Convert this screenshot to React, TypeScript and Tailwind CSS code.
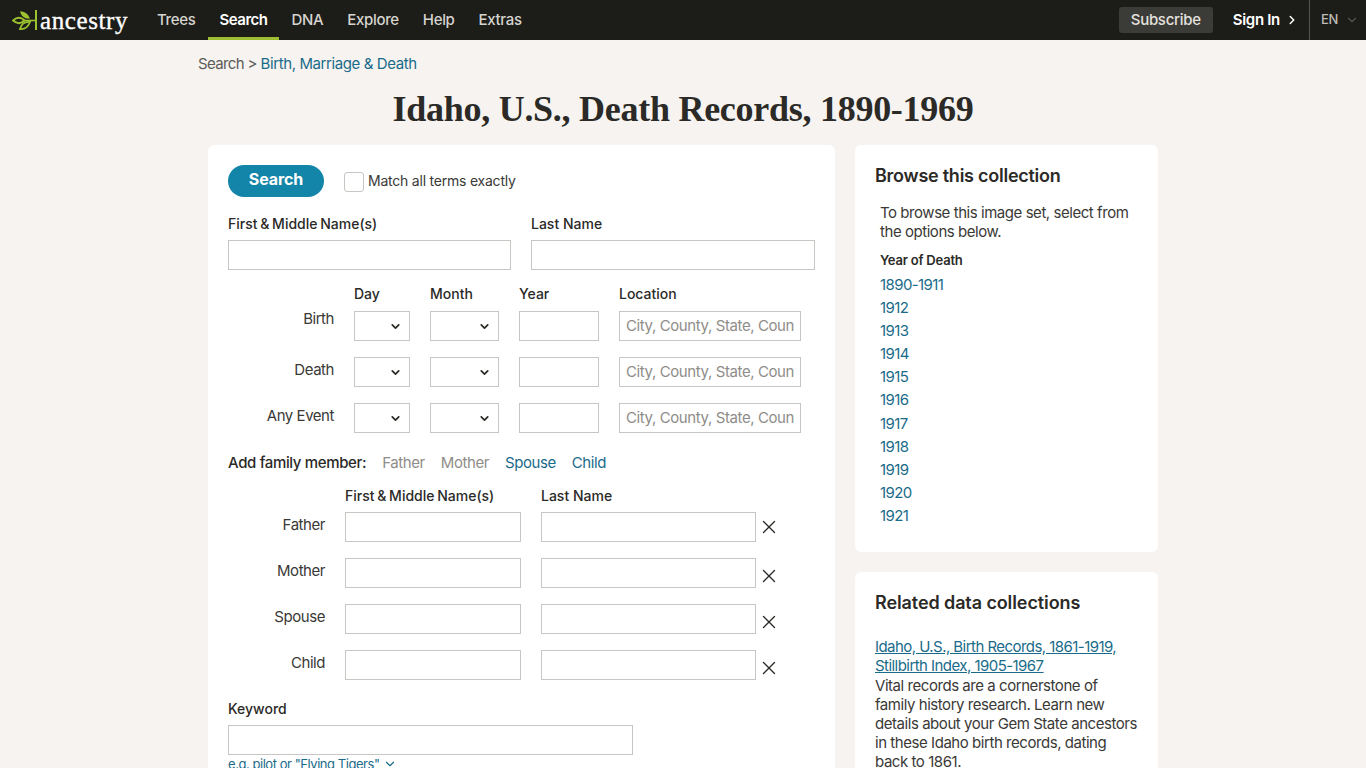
import { ChevronDown, ChevronRight, X } from "lucide-react";

const navItems = ["Trees", "Search", "DNA", "Explore", "Help", "Extras"];
const years = ["1890-1911", "1912", "1913", "1914", "1915", "1916", "1917", "1918", "1919", "1920", "1921"];
const inputClass = "h-[30px] border border-[#c8c6c2] bg-white px-[6px] pb-[1px] text-[15px] tracking-[-0.4px] outline-none placeholder:text-[#8f8d89]";

const Logo = () => (
  <div className="flex items-center">
    <svg width="26" height="26" viewBox="0 0 26 26" fill="none" className="mr-[2px]">
      <path d="M1 13.500 C5 10 9 10 12.500 13.500 C9 17 5 17 1 13.500Z" stroke="#9cc32f" strokeWidth="1.8" />
      <path d="M8 4.500 C12 4 16 6.500 18 11.500 C13.500 12 9.500 10 8 4.500Z" fill="#9cc32f" />
      <path d="M8 22 C12 22.500 16 20 18 15 C13.500 14.500 9.500 16.500 8 22Z" stroke="#9cc32f" strokeWidth="1.8" />
      <path d="M12 13.500 H23" stroke="#9cc32f" strokeWidth="1.6" />
      <path d="M24 3 V23" stroke="#9cc32f" strokeWidth="2" />
    </svg>
    <span className="font-['Liberation_Serif',serif] text-[25px] leading-none tracking-[0.6px] text-white [-webkit-text-stroke:0.35px_white]">ancestry</span>
  </div>
);

const Header = () => (
  <header className="flex h-10 shrink-0 items-stretch bg-[#1c1c18] pl-3 text-[15px] font-medium tracking-[-0.3px]">
    <div className="mr-4 flex w-[117px] items-center">
      <Logo />
    </div>
    <nav className="flex tracking-[-0.33px]">
      {navItems.map((item) => (
        <a
          key={item}
          className={
            item === "Search"
              ? "flex items-center border-b-[3px] border-[#9cbe30] px-3 pt-[3px] font-semibold tracking-[-0.5px] text-white"
              : "flex items-center border-b-[3px] border-transparent px-3 pt-[3px] text-[#d6d4cf]"
          }
        >
          {item}
        </a>
      ))}
    </nav>
    <div className="ml-auto flex items-center">
      <a className="flex h-[26px] w-[94px] items-center justify-center rounded-[3px] bg-[#3b3b38] text-[#e4e2de]">Subscribe</a>
      <a className="ml-5 flex items-center font-semibold text-white">
        Sign In
        <ChevronRight size={14} strokeWidth={2.5} className="ml-[5px]" />
      </a>
      <div className="ml-[10px] flex h-full w-[57px] items-center border-l border-[#55544f] pl-[11px] text-[13px] text-[#bdbbb6]">
        EN
        <ChevronDown size={14} className="ml-[7px] text-[#55544f]" />
      </div>
    </div>
  </header>
);

const SelectBox = ({ width }: { width: string }) => (
  <div className={"relative h-[30px] border border-[#c8c6c2] bg-white " + width}>
    <ChevronDown size={13} strokeWidth={3.2} className="absolute top-[8px] right-[7px] text-[#2b2a27]" />
  </div>
);

const DateRow = ({ label, labelClass }: { label: string; labelClass: string }) => (
  <div className="flex h-[30px] gap-5">
    <div className={"w-[106px] text-right text-[15px] leading-[18px] tracking-[-0.45px] text-[#3a3936] " + labelClass}>{label}</div>
    <SelectBox width="w-[56px]" />
    <SelectBox width="w-[69px]" />
    <input className={inputClass + " w-[80px]"} />
    <input className={inputClass + " w-[182px]"} placeholder="City, County, State, Country" />
  </div>
);

const FamilyRow = ({ label, xClass }: { label: string; xClass: string }) => (
  <div className="flex h-[30px] gap-5">
    <div className="mt-1 w-[97px] text-right text-[15px] leading-[18px] tracking-[-0.45px] text-[#3a3936]">{label}</div>
    <input className={inputClass + " w-[176px]"} />
    <div className="flex gap-[2px]">
      <input className={inputClass + " w-[215px]"} />
      <X size={22} strokeWidth={1.5} className={"text-[#2b2a27] " + xClass} />
    </div>
  </div>
);

const SearchForm = () => (
  <section className="w-[627px] rounded-t-md bg-white p-5 text-[#2b2a27]">
    <div className="flex h-8 items-center">
      <button className="h-8 w-24 rounded-full bg-[#1385a8] pb-[5px] text-[16px] font-bold tracking-[-0.1px] text-white">Search</button>
      <span className="ml-5 mt-[1px] h-5 w-5 rounded-[3px] border border-[#c8c6c2]" />
      <span className="ml-[4px] text-sm tracking-[-0.22px] text-[#3a3936]">Match all terms exactly</span>
    </div>

    <div className="mt-[18px] grid grid-cols-[283px_284px] gap-x-5">
      <label className="h-[25px] text-sm leading-[18px] font-medium [word-spacing:-1px]">First &amp; Middle Name(s)</label>
      <label className="h-[25px] text-sm leading-[18px] font-medium">Last Name</label>
      <input className={inputClass} />
      <input className={inputClass} />
    </div>

    <div className="mt-[15px] ml-[126px] flex h-[26px] gap-5 text-sm leading-[18px] font-medium">
      <span className="w-[56px]">Day</span>
      <span className="w-[69px]">Month</span>
      <span className="w-[80px]">Year</span>
      <span>Location</span>
    </div>
    <div className="flex flex-col gap-4">
      <DateRow label="Birth" labelClass="-mt-[1px]" />
      <DateRow label="Death" labelClass="mt-1" />
      <DateRow label="Any Event" labelClass="mt-[4px]" />
    </div>

    <div className="mt-5 flex h-5 items-center gap-4 text-[15px] tracking-[-0.42px]">
      <span className="font-medium tracking-[-0.35px]">Add family member:</span>
      <span className="text-[#8f8d89]">Father</span>
      <span className="text-[#8f8d89]">Mother</span>
      <a className="text-[#1a6b8a]">Spouse</a>
      <a className="text-[#1a6b8a]">Child</a>
    </div>

    <div className="mt-[14px] ml-[117px] flex h-[25px] gap-5 text-sm leading-[18px] font-medium">
      <span className="w-[176px] [word-spacing:-1px]">First &amp; Middle Name(s)</span>
      <span>Last Name</span>
    </div>
    <div className="flex flex-col gap-4">
      <FamilyRow label="Father" xClass="mt-[4px]" />
      <FamilyRow label="Mother" xClass="mt-[7px]" />
      <FamilyRow label="Spouse" xClass="mt-[7px]" />
      <FamilyRow label="Child" xClass="mt-[7px]" />
    </div>

    <label className="mt-5 block h-[25px] text-sm leading-[18px] font-medium">Keyword</label>
    <input className={inputClass + " block w-[405px]"} />
    <a className="mt-[1px] flex items-center text-[13px] leading-4 tracking-[-0.45px] text-[#1a6b8a]">
      e.g. pilot or "Flying Tigers"
      <ChevronDown size={14} className="ml-[3px]" />
    </a>
  </section>
);

const Sidebar = () => (
  <aside className="flex w-[303px] flex-col gap-5 text-[#2b2a27]">
    <section className="h-[407px] rounded-md bg-white p-5">
      <h2 className="text-lg leading-[22px] font-semibold tracking-[-0.25px]">Browse this collection</h2>
      <p className="mt-4 ml-[5px] text-[15px] leading-[19px] tracking-[-0.45px] text-[#3a3936]">
        To browse this image set, select from the options below.
      </p>
      <h3 className="mt-[10px] ml-[5px] text-[13px] leading-[18px] font-semibold tracking-[-0.2px]">Year of Death</h3>
      <ul className="mt-[4px] ml-[5px] text-[15px] leading-[23.1px] tracking-[-0.6px] text-[#1a6b8a]">
        {years.map((year) => (
          <li key={year}>{year}</li>
        ))}
      </ul>
    </section>
    <section className="rounded-t-md bg-white p-5">
      <h2 className="text-lg leading-[22px] font-semibold tracking-[-0.1px]">Related data collections</h2>
      <a className="mt-[23px] block w-[250px] text-[15px] leading-[19px] tracking-[-0.55px] text-[#1a6b8a] underline">
        Idaho, U.S., Birth Records, 1861-1919, Stillbirth Index, 1905-1967
      </a>
      <p className="mt-[1px] text-[15px] leading-[19px] tracking-[-0.45px] text-[#3a3936]">
        Vital records are a cornerstone of family history research. Learn new details about your Gem State ancestors in these Idaho birth records, dating back to 1861.
      </p>
    </section>
  </aside>
);

export default function App() {
  return (
    <div className="flex h-screen flex-col overflow-hidden bg-[#f6f3f0] font-['Inter','Liberation_Sans',sans-serif]">
      <Header />
      <main className="mx-auto w-[970px]">
        <div className="mt-[14px] text-[15px] leading-5 tracking-[-0.4px] text-[#5c5b57]">
          <span className="tracking-[-0.65px]">Search &gt;</span> <a className="text-[#1a6b8a]">Birth, Marriage &amp; Death</a>
        </div>
        <h1 className="mt-[13px] text-center font-['Liberation_Serif',serif] text-[36px] leading-[44px] font-bold tracking-[-0.27px] text-[#2b2a27]">
          Idaho, U.S., Death Records, 1890-1969
        </h1>
        <div className="mt-[14px] ml-[10px] flex gap-5">
          <SearchForm />
          <Sidebar />
        </div>
      </main>
    </div>
  );
}
